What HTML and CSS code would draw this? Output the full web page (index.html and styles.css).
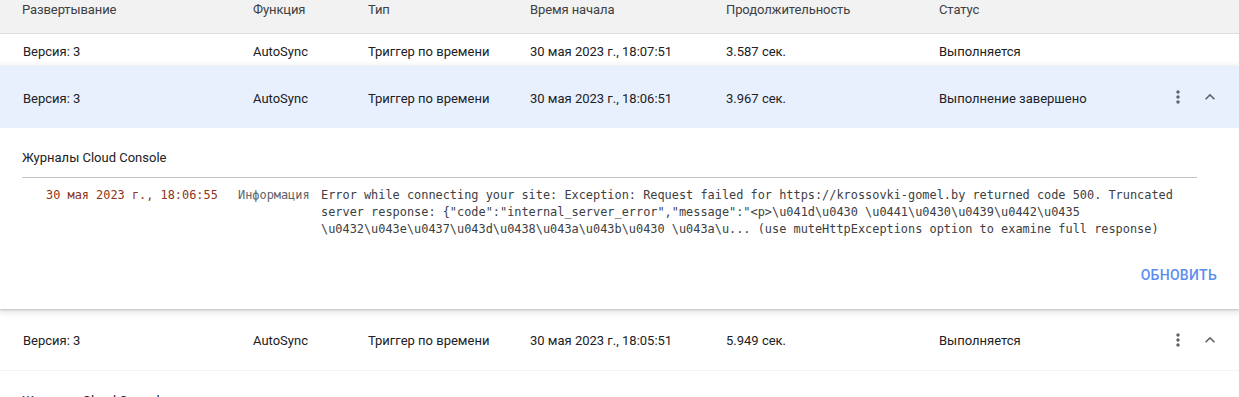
FILE: index.html
```html
<!DOCTYPE html>
<html lang="ru">
<head>
<meta charset="utf-8">
<title>Executions</title>
<link rel="stylesheet" href="styles.css">
</head>
<body>
<div class="table">
  <div class="row head">
    <div>Развертывание</div>
    <div>Функция</div>
    <div>Тип</div>
    <div>Время начала</div>
    <div>Продолжительность</div>
    <div>Статус</div>
    <div></div>
  </div>

  <div class="row plain short">
    <div class="c1">Версия: 3</div>
    <div>AutoSync</div>
    <div>Триггер по времени</div>
    <div>30 мая 2023 г., 18:07:51</div>
    <div>3.587 сек.</div>
    <div>Выполняется</div>
    <div></div>
  </div>

  <div class="card">
    <div class="row tall selected">
      <div class="c1">Версия: 3</div>
      <div>AutoSync</div>
      <div>Триггер по времени</div>
      <div>30 мая 2023 г., 18:06:51</div>
      <div>3.967 сек.</div>
      <div>Выполнение завершено</div>
      <div class="actions">
        <span class="icon"><svg viewBox="0 0 24 24" width="20" height="20"><path fill="#5f6368" d="M12 8c1.1 0 2-.9 2-2s-.9-2-2-2-2 .9-2 2 .9 2 2 2zm0 2c-1.1 0-2 .9-2 2s.9 2 2 2 2-.9 2-2-.9-2-2-2zm0 6c-1.1 0-2 .9-2 2s.9 2 2 2 2-.9 2-2-.9-2-2-2z"/></svg></span>
        <span class="icon"><svg viewBox="0 0 24 24" width="20" height="20"><path fill="#5f6368" d="M12 8l-6 6 1.41 1.41L12 10.83l4.59 4.58L18 14z"/></svg></span>
      </div>
    </div>
    <div class="panel">
      <div class="panel-title">Журналы Cloud Console</div>
      <div class="sep"></div>
      <div class="log">
        <div class="log-date">30 мая 2023 г., 18:06:55</div>
        <div class="log-level">Информация</div>
        <div class="log-msg">Error while connecting your site: Exception: Request failed for https://krossovki-gomel.by returned code 500. Truncated server response: {"code":"internal_server_error","message":"&lt;p&gt;\u041d\u0430 \u0441\u0430\u0439\u0442\u0435 \u0432\u043e\u0437\u043d\u0438\u043a\u043b\u0430 \u043a\u... (use muteHttpExceptions option to examine full response)</div>
      </div>
      <div class="panel-actions">
        <button class="btn">Обновить</button>
      </div>
    </div>
  </div>

  <div class="row tall plain bordered">
    <div class="c1">Версия: 3</div>
    <div>AutoSync</div>
    <div>Триггер по времени</div>
    <div>30 мая 2023 г., 18:05:51</div>
    <div>5.949 сек.</div>
    <div>Выполняется</div>
    <div class="actions">
      <span class="icon"><svg viewBox="0 0 24 24" width="20" height="20"><path fill="#5f6368" d="M12 8c1.1 0 2-.9 2-2s-.9-2-2-2-2 .9-2 2 .9 2 2 2zm0 2c-1.1 0-2 .9-2 2s.9 2 2 2 2-.9 2-2-.9-2-2-2zm0 6c-1.1 0-2 .9-2 2s.9 2 2 2 2-.9 2-2-.9-2-2-2z"/></svg></span>
      <span class="icon"><svg viewBox="0 0 24 24" width="20" height="20"><path fill="#5f6368" d="M12 8l-6 6 1.41 1.41L12 10.83l4.59 4.58L18 14z"/></svg></span>
    </div>
  </div>
  <div class="panel">
    <div class="panel-title">Журналы Cloud Console</div>
  </div>
</div>
</body>
</html>
```
FILE: styles.css
```css
html, body {
  margin: 0;
  padding: 0;
  background: #ffffff;
}
body {
  font-family: Roboto, "Noto Sans", "Liberation Sans", sans-serif;
  font-size: 13px;
  color: #202124;
  overflow: hidden;
}
.table {
  width: 1239px;
}
.row {
  box-sizing: border-box;
  display: grid;
  grid-template-columns: 231px 115px 162px 196px 213px 1fr 64px;
  padding: 3px 13px 0 22px;
  align-items: center;
  line-height: 18px;
  white-space: nowrap;
}
.head {
  height: 34px;
  padding-top: 1px;
  align-items: start;
  background: #f2f2f2;
  border-bottom: 1px solid #dcdcdc;
  color: #3c4043;
  letter-spacing: -0.1px;
}
.row .c1 {
  padding-left: 1px;
}
.short {
  height: 32px;
}
.tall {
  height: 62px;
}
.plain {
  background: #ffffff;
}
.bordered {
  border-bottom: 1px solid #f4f4f4;
}
.selected {
  background: #e8f0fe;
}
.card {
  position: relative;
  z-index: 1;
  background: #ffffff;
  box-shadow: 0 1px 2px rgba(60, 64, 67, 0.25), 0 2px 6px 2px rgba(60, 64, 67, 0.12);
}
.actions {
  display: flex;
  align-items: center;
  margin-top: -3px;
}
.icon {
  width: 32px;
  height: 32px;
  display: flex;
  align-items: center;
  justify-content: center;
}
.panel {
  padding: 20px 42px 16px 22px;
}
.panel-title {
  line-height: 20px;
  color: #202124;
}
.sep {
  height: 1px;
  background: #c4c4c4;
  margin-top: 9px;
}
.log {
  display: grid;
  grid-template-columns: 192px 83px 1fr;
  padding: 9px 0 0 24px;
  font-family: "DejaVu Sans Mono", "Liberation Mono", monospace;
  font-size: 11.9px;
  line-height: 17px;
}
.log-date {
  color: #8f3416;
  white-space: nowrap;
}
.log-level {
  color: #5f6368;
}
.log-msg {
  color: #3c4043;
}
.panel-actions {
  display: flex;
  justify-content: flex-end;
  margin-top: 19px;
  margin-right: -28px;
}
.btn {
  height: 36px;
  padding: 0 8px;
  border: none;
  background: transparent;
  font-family: Roboto, "Noto Sans", sans-serif;
  font-size: 14px;
  font-weight: 500;
  letter-spacing: 0.3px;
  text-transform: uppercase;
  color: #5b8def;
}
```
